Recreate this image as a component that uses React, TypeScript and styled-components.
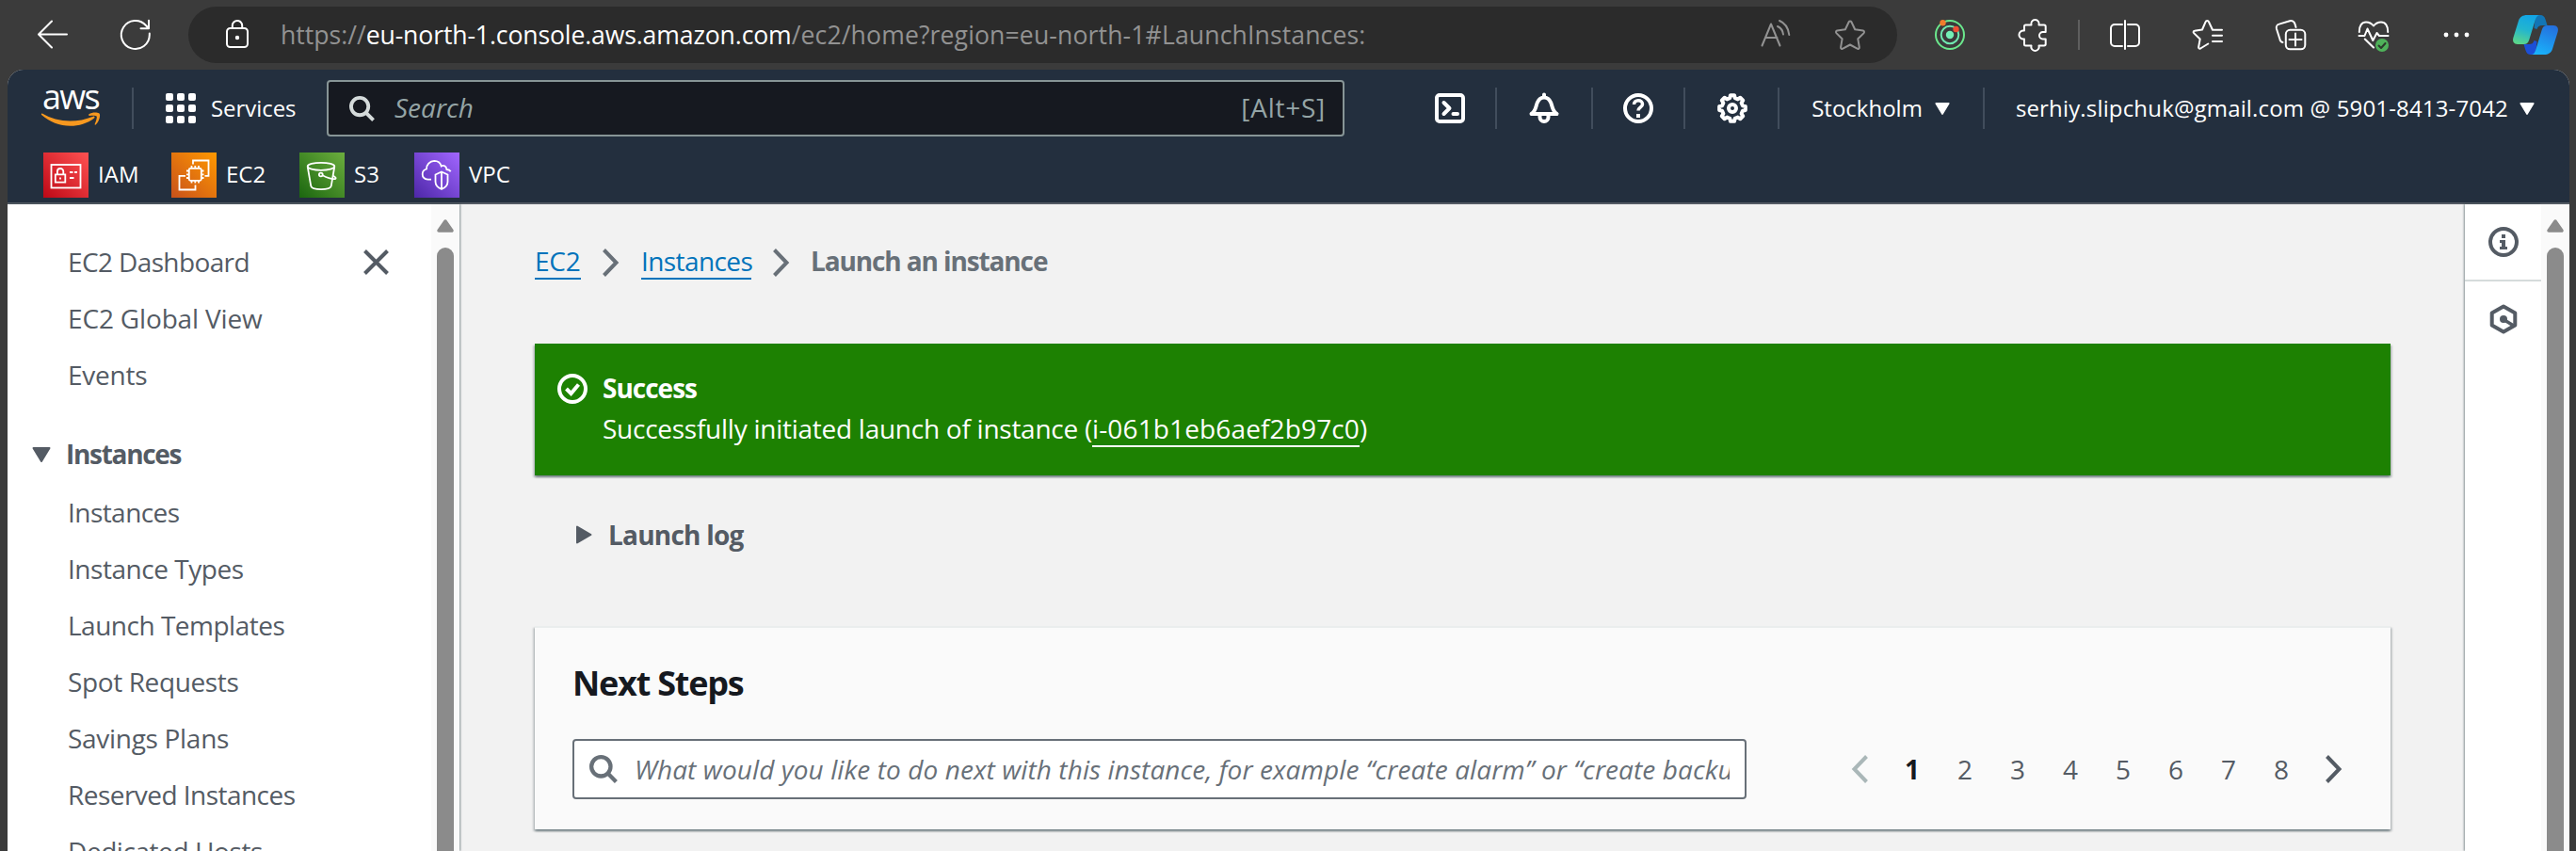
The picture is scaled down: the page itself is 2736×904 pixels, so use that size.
import React from "react";
import styled, { createGlobalStyle } from "styled-components";

const GlobalStyle = createGlobalStyle`
  * { box-sizing: border-box; }
  html, body { margin: 0; background: #3b3b3b; }
  body { font-family: "Open Sans", "Noto Sans", sans-serif; overflow: hidden; }
  svg { display: block; flex: none; overflow: visible; }
`;

const Window = styled.div`
  width: 2736px;
  height: 904px;
  display: flex;
  flex-direction: column;
  overflow: hidden;
  background: #3b3b3b;
`;

/* ---------- Browser toolbar ---------- */

const BrowserBar = styled.div`
  height: 74px;
  flex: none;
  display: flex;
  align-items: center;
  padding: 0 19px 0 40px;
  color: #fff;
`;

const NavButtons = styled.div`
  width: 160px;
  display: flex;
  gap: 56px;
`;

const AddressBar = styled.div`
  width: 1815px;
  height: 60px;
  border-radius: 30px;
  background: #2b2b2b;
  display: flex;
  align-items: center;
  padding: 0 34px 0 40px;
`;

const Url = styled.div`
  flex: 1;
  display: flex;
  margin-left: 34px;
  padding-bottom: 1px;
  font-size: 26.6px;
  line-height: 58px;
  white-space: pre;
  color: #929292;
`;

const UrlHost = styled.span`
  color: #fff;
  letter-spacing: -0.13px;
`;

const UrlPath = styled.span`
  letter-spacing: 0.12px;
`;

const AddressActions = styled.div`
  display: flex;
  gap: 47px;
  color: #929292;
`;

const Extensions = styled.div`
  flex: 1;
  display: flex;
  align-items: center;
  justify-content: space-between;
  margin-left: 40px;
`;

const ExtensionGroup = styled.div<{ $gap: number }>`
  display: flex;
  align-items: center;
  gap: ${(p) => p.$gap}px;
`;

const BarDivider = styled.span`
  width: 2px;
  height: 32px;
  background: #5e5e5e;
`;

/* ---------- Console header ---------- */

const Console = styled.div`
  flex: 1;
  min-height: 0;
  margin: 0 7px 0 8px;
  display: flex;
  flex-direction: column;
  border-radius: 17px 17px 0 0;
  overflow: hidden;
  background: #f2f2f2;
`;

const Header = styled.header`
  flex: none;
  height: 143px;
  background: #232f3e;
  border-bottom: 2px solid #545b64;
  color: #fff;
  font-weight: 500;
  font-size: 24px;
`;

const HeaderRow = styled.div`
  height: 82px;
  display: flex;
  align-items: center;
  padding: 0 37px 0 36px;
`;

const Divider = styled.span<{ $left: number; $right: number }>`
  width: 2px;
  height: 44px;
  flex: none;
  margin: 0 ${(p) => p.$right}px 0 ${(p) => p.$left}px;
  background: #414d5c;
`;

const Label = styled.span`
  padding-bottom: 2px;
`;

const Services = styled.div`
  width: 171px;
  display: flex;
  align-items: center;
  gap: 16px;
  letter-spacing: -0.05px;
`;

const ServiceGrid = styled.span`
  display: grid;
  grid-template-columns: repeat(3, 8px);
  gap: 4px;
`;

const GridDot = styled.i`
  height: 8px;
  border-radius: 2px;
  background: #fff;
`;

const GlobalSearch = styled.div`
  width: 1081px;
  height: 60px;
  display: flex;
  align-items: center;
  padding: 0 18px 0 22px;
  border: 2px solid #879596;
  border-radius: 4px;
  background: #161920;
  font-size: 28px;
  font-weight: 400;
  line-height: 54px;
  color: #95a5a6;
`;

const SearchHint = styled.span`
  flex: 1;
  margin-left: 21px;
  padding-bottom: 2px;
  font-style: italic;
`;

const Shortcut = styled.span`
  padding-bottom: 2px;
  letter-spacing: 0.75px;
`;

const HeaderTools = styled.div`
  display: flex;
  align-items: center;
  margin-left: auto;
`;

const MenuLabel = styled.span<{ $spacing: number; $gap: number }>`
  display: flex;
  align-items: center;
  gap: ${(p) => p.$gap}px;
  letter-spacing: ${(p) => p.$spacing}px;
  white-space: nowrap;
`;

const Favorites = styled.nav`
  display: flex;
  padding: 5px 0 0 38px;
`;

const Favorite = styled.span<{ $width: number }>`
  width: ${(p) => p.$width}px;
  display: flex;
  align-items: center;
  gap: 10px;
  line-height: 48px;
`;

/* ---------- Body ---------- */

const Body = styled.div`
  flex: 1;
  min-height: 0;
  display: flex;
`;

const Sidebar = styled.aside`
  width: 480px;
  flex: none;
  display: flex;
  background: #fff;
  box-shadow: 1px 0 2px rgba(0, 28, 36, 0.45);
  z-index: 1;
`;

const SideNav = styled.nav`
  flex: 1;
  padding: 31px 45px 0 64px;
  overflow: hidden;
  font-size: 28px;
  line-height: 60px;
  color: #545b64;
`;

const NavLine = styled.div<{ $spacing: number }>`
  height: 60px;
  display: flex;
  align-items: center;
  justify-content: space-between;
  letter-spacing: ${(p) => p.$spacing}px;
  white-space: nowrap;
`;

const NavSection = styled.div`
  height: 62px;
  display: flex;
  gap: 16px;
  margin: 24px 0 0 -38px;
  font-weight: 700;
  letter-spacing: -1.3px;

  svg { margin-top: 23px; }
`;

const ScrollTrack = styled.div`
  width: 30px;
  flex: none;
  display: flex;
  flex-direction: column;
  align-items: center;
  gap: 16px;
  padding-top: 16px;
  background: #fafafa;
`;

const ScrollThumb = styled.div`
  flex: 1;
  width: 18px;
  border-radius: 9px 9px 0 0;
  background: #8b8b8b;
`;

const Main = styled.main`
  flex: 1;
  display: flex;
  flex-direction: column;
  padding: 42px 79px 0 80px;
  font-size: 28px;
`;

const Breadcrumbs = styled.div`
  height: 38px;
  display: flex;
  align-items: flex-start;
  line-height: 37px;
  margin-bottom: 68px;

  svg { margin-top: 5px; }
`;

const CrumbLink = styled.a<{ $width: number; $spacing: number }>`
  width: ${(p) => p.$width}px;
  height: 38px;
  letter-spacing: ${(p) => p.$spacing}px;
  white-space: nowrap;
  color: #0073bb;
  border-bottom: 2px solid #0073bb;
`;

const CrumbChevron = styled.span`
  margin: 0 23px;
`;

const CurrentCrumb = styled.span`
  margin-left: -1px;
  font-weight: 700;
  letter-spacing: -1.12px;
  color: #687078;
`;

const raised = `
  box-shadow: 0 2px 2px rgba(0, 28, 36, 0.35), 2px 2px 2px rgba(0, 28, 36, 0.15),
    -2px 2px 2px rgba(0, 28, 36, 0.15);
`;

const SuccessBar = styled.section`
  height: 140px;
  flex: none;
  display: flex;
  gap: 16px;
  padding: 24px;
  background: #1d8102;
  color: #fff;
  line-height: 44px;
  ${raised}

  svg { margin-top: 8px; }
`;

const FlashTitle = styled.div`
  height: 44px;
  line-height: 46px;
  font-weight: 700;
  letter-spacing: -1px;
`;

const FlashText = styled.div`
  display: flex;
  letter-spacing: -0.26px;
  white-space: pre;
`;

const InstanceLink = styled.a`
  height: 38px;
  margin-top: 4px;
  line-height: 36px;
  letter-spacing: 0.14px;
  border-bottom: 2px solid #fff;
`;

const LaunchLog = styled.div`
  height: 44px;
  display: flex;
  align-items: center;
  gap: 17px;
  margin: 41px 0 75px;
  padding-left: 44px;
  font-weight: 700;
  line-height: 44px;
  letter-spacing: -0.78px;
  color: #545b64;
`;

const Panel = styled.section`
  height: 216px;
  padding: 35px 51px 32px 40px;
  border-top: 2px solid #eaeded;
  background: #fafafa;
  ${raised}
`;

const PanelTitle = styled.h2`
  margin: 0 0 35px;
  font-size: 36px;
  line-height: 48px;
  letter-spacing: -1.22px;
  color: #16191f;
`;

const FilterRow = styled.div`
  display: flex;
  align-items: center;
  justify-content: space-between;
`;

const FilterInput = styled.div`
  width: 1247px;
  height: 64px;
  display: flex;
  align-items: center;
  gap: 18px;
  padding: 0 16px;
  border: 2px solid #687078;
  border-radius: 4px;
  background: #fff;
  color: #687078;
`;

const Placeholder = styled.span`
  flex: 1;
  overflow: hidden;
  font-style: italic;
  line-height: 60px;
  letter-spacing: 0.09px;
  white-space: nowrap;
`;

const Pagination = styled.div`
  display: flex;
  align-items: center;
  gap: 19px;
`;

const Pages = styled.div`
  display: flex;
`;

const Page = styled.span<{ $current?: boolean }>`
  width: 56px;
  text-align: center;
  line-height: 60px;
  font-weight: ${(p) => (p.$current ? 700 : 400)};
  color: ${(p) => (p.$current ? "#16191f" : "#545b64")};
`;

const ToolRail = styled.aside`
  width: 81px;
  flex: none;
  display: flex;
  flex-direction: column;
  align-items: center;
  background: #fff;
  box-shadow: -1px 0 2px rgba(0, 28, 36, 0.45);
`;

const RailButton = styled.div<{ $line?: boolean }>`
  width: 100%;
  height: 82px;
  display: flex;
  justify-content: center;
  padding-top: 24px;
  border-bottom: ${(p) => (p.$line ? "2px solid #d5dbdb" : "none")};
`;

/* ---------- Icons ---------- */

type StrokeProps = {
  w?: number;
  h?: number;
  stroke?: number;
  color?: string;
  children: React.ReactNode;
};

const Icon = ({ w = 32, h = 32, stroke = 2, color = "currentColor", children }: StrokeProps) => (
  <svg
    width={w}
    height={h}
    viewBox={`0 0 ${w} ${h}`}
    fill="none"
    stroke={color}
    strokeWidth={stroke}
    strokeLinecap="round"
    strokeLinejoin="round"
  >
    {children}
  </svg>
);

const Magnifier = ({ w, color }: { w: number; color: string }) => (
  <svg width={w} height={w} viewBox="0 0 28 28" fill="none" stroke={color} strokeWidth="4">
    <circle cx="11.5" cy="11.5" r="9.5" />
    <path d="M18.5 18.5l8 8" />
  </svg>
);

const Chevron = ({ left, color }: { left?: boolean; color: string }) => (
  <svg width="18" height="30" viewBox="0 0 18 30" fill="none" stroke={color} strokeWidth="4">
    <path d={left ? "M16.5 1.5L3.5 15l13 13.5" : "M1.5 1.5L14.5 15l-13 13.5"} />
  </svg>
);

const CaretDown = ({ w, h, color }: { w: number; h: number; color: string }) => (
  <svg width={w} height={h} viewBox="0 0 20 16">
    <path d="M1.5 1h17L10 15z" fill={color} stroke={color} strokeWidth="2" strokeLinejoin="round" />
  </svg>
);

const ScrollArrow = () => (
  <svg width="18" height="14" viewBox="0 0 18 14">
    <path d="M2 12L9 2l7 10z" fill="#8b8b8b" stroke="#8b8b8b" strokeWidth="3.5" strokeLinejoin="round" />
  </svg>
);

const gearPath = (() => {
  const pts: string[] = [];
  for (let i = 0; i < 8; i++) {
    [
      [-14, 11.2],
      [-8.5, 14],
      [8.5, 14],
      [14, 11.2],
    ].forEach(([deg, r]) => {
      const a = ((i * 45 + deg) * Math.PI) / 180;
      pts.push(`${(16 + r * Math.sin(a)).toFixed(2)} ${(16 - r * Math.cos(a)).toFixed(2)}`);
    });
  }
  return `M${pts.join("L")}z`;
})();

const AwsLogo = () => (
  <svg width="63" height="38" viewBox="0 0 63 38">
    <text x="1" y="20" fill="#fff" fontSize="36" fontWeight="500" letterSpacing="-1.7">
      aws
    </text>
    <path d="M.8 24.600C9.500 29.800 20 32.600 30.500 32.600c8 0 16.500-1.700 24.500-4.900 1.200-.5 2.200.8 1.100 1.700C49 35 39.500 37.700 30.800 37.700 19.200 37.700 8.500 33.400.4 26.200c-.9-.8-.4-2 .4-1.600z" fill="#f7981f" />
    <path d="M50.500 25.300c3.300-2.300 8.600-2 10.700-1 2 1 .6 8.200-3.300 12-.8.7-1.500.3-1.200-.5 1-2.400 2.700-7.200 1.900-8.300-.8-1.100-5-.9-7.500-.6-.9.1-1.300-1.100-.6-1.600z" fill="#f7981f" />
  </svg>
);

type TileProps = { id: string; from: string; to: string; children: React.ReactNode };

const ServiceTile = ({ id, from, to, children }: TileProps) => (
  <svg width="48" height="48" viewBox="0 0 48 48">
    <linearGradient id={id} x1="0" y1="1" x2="1" y2="0">
      <stop offset="0" stopColor={from} />
      <stop offset="1" stopColor={to} />
    </linearGradient>
    <rect width="48" height="48" fill={`url(#${id})`} />
    <g fill="none" stroke="#fff" strokeWidth="1.8">
      {children}
    </g>
  </svg>
);

const Copilot = () => (
  <svg width="48" height="42" viewBox="0 0 48 42">
    <defs>
      <linearGradient id="cpA" x1="0.6" y1="0" x2="0.3" y2="1">
        <stop offset="0" stopColor="#12a5e6" />
        <stop offset=".5" stopColor="#22b5cf" />
        <stop offset="1" stopColor="#5bd68b" />
      </linearGradient>
      <linearGradient id="cpB" x1="0.7" y1="0" x2="0.3" y2="1">
        <stop offset="0" stopColor="#2470de" />
        <stop offset="1" stopColor="#19b3fb" />
      </linearGradient>
    </defs>
    <path d="M24 0h5c3 0 4.500 1.500 5.500 4.500l2 6.500H31c-3 0-4.500 1-5.500 4l-3-1z" fill="#1275b5" />
    <path d="M24 42h-5c-3 0-4.500-1.500-5.500-4.500L11.500 31H17c3 0 4.500-1 5.500-4l3 1z" fill="#1c4fd6" />
    <path d="M15 0h14c-3 0-4.300 2-5.200 5l-6.600 21.500C16.200 29.600 14.500 31 11.500 31H5c-4 0-5.800-3-4.600-7L6 6C7.300 2 10.500 0 15 0z" fill="url(#cpA)" />
    <path d="M33 42H19c3 0 4.300-2 5.200-5l6.600-21.500C31.800 12.400 33.500 11 36.500 11H43c4 0 5.800 3 4.600 7L42 36c-1.300 4-4.500 6-9 6z" fill="url(#cpB)" />
  </svg>
);

/* ---------- Data ---------- */

const topLinks: [string, number][] = [
  ["EC2 Dashboard", -0.62],
  ["EC2 Global View", -0.16],
  ["Events", -0.25],
];

const instanceLinks: [string, number][] = [
  ["Instances", -0.55],
  ["Instance Types", -0.46],
  ["Launch Templates", -0.5],
  ["Spot Requests", -0.38],
  ["Savings Plans", -0.3],
  ["Reserved Instances", -0.54],
  ["Dedicated Hosts", -0.44],
];

export default function App() {
  return (
    <Window>
      <GlobalStyle />
      <BrowserBar>
        <NavButtons>
          <Icon>
            <path d="M31 15.500H1.500M15 1.500l-14 14 14 14" />
          </Icon>
          <Icon>
            <path d="M30.800 14.500V16A15 15 0 1 1 27 6l3 3.200M30 .800v8.400h-8.500" />
          </Icon>
        </NavButtons>
        <AddressBar>
          <Icon w={24}>
            <rect x="1" y="9" width="22" height="20" rx="3.5" />
            <path d="M6.800 9V6.200a5.200 5.200 0 0 1 10.400 0V9" />
            <circle cx="12" cy="19" r="1.2" fill="#fff" />
          </Icon>
          <Url>
            <span>https://</span>
            <UrlHost>eu-north-1.console.aws.amazon.com</UrlHost>
            <UrlPath>/ec2/home?region=eu-north-1#LaunchInstances:</UrlPath>
          </Url>
          <AddressActions>
            <Icon>
              <path d="M1.500 27.500L11 4.500l9.500 23M5 19h12.500M18 7c3.500 1.500 5.500 4.500 6 8.500M20 1c6 2.500 9.500 8 10.300 15" />
            </Icon>
            <Icon>
              <path d="M14.700 2.300a1.500 1.500 0 0 1 2.700 0l3.800 8 8.600 1.300a1.500 1.500 0 0 1 .8 2.500l-6.300 6.200 1.500 8.800a1.500 1.500 0 0 1-2.200 1.600L16 26.500l-7.700 4.200a1.500 1.500 0 0 1-2.200-1.600l1.500-8.800-6.200-6.200a1.500 1.500 0 0 1 .8-2.500l8.700-1.300z" />
            </Icon>
          </AddressActions>
        </AddressBar>
        <Extensions>
          <ExtensionGroup $gap={32}>
            <ExtensionGroup $gap={56}>
              <Icon color="#6fe89f">
                <circle cx="16" cy="16" r="15" stroke="#6be88d" />
                <circle cx="16" cy="16" r="9.3" stroke="#70e9b0" />
                <circle cx="16" cy="16" r="4.2" fill="#74efb5" stroke="none" />
                <circle cx="8.5" cy="3.2" r="3.2" fill="#f07c2c" stroke="none" />
                <circle cx="22.5" cy="10" r="3.2" fill="#ee4f33" stroke="none" />
              </Icon>
              <Icon>
                <path d="M8.500 5.500h6a4.200 4.200 0 1 1 8 0H28a1.700 1.700 0 0 1 1.700 1.700V13h-3a3.700 3.700 0 0 0 0 7.400h3v5.400a1.700 1.700 0 0 1-1.700 1.700h-5.500a4.200 4.200 0 1 1-8 0h-6A1.500 1.500 0 0 1 7 26v-5.500a4.600 4.600 0 1 1 0-9V7a1.500 1.500 0 0 1 1.500-1.500z" />
              </Icon>
            </ExtensionGroup>
            <BarDivider />
            <ExtensionGroup $gap={56}>
              <Icon>
                <path d="M13 5H5a4 4 0 0 0-4 4v15a4 4 0 0 0 4 4h8M16 1v30M19 5h8a4 4 0 0 1 4 4v15a4 4 0 0 1-4 4h-8" />
              </Icon>
              <Icon>
                <path d="M31 10.700H21l-4-8.500a1.800 1.800 0 0 0-3.400 0L10 10.500l-8.200 1.300a1.300 1.300 0 0 0-.7 2.300l6.600 6.400-1.600 8.600a1.400 1.400 0 0 0 2 1.400l8.200-5M21 16.800h10M21 23h10" />
              </Icon>
              <Icon>
                <path d="M7.500 24a4 4 0 0 1-3-3.200L.9 9.500A4 4 0 0 1 3.700 4.600L15 1.200a4.500 4.500 0 0 1 5.500 3.200L21.500 8" />
                <rect x="10.8" y="10.8" width="20.5" height="20.5" rx="4.5" />
                <path d="M21 14.500v13M14.500 21h13" />
              </Icon>
              <Icon>
                <path d="M.8 13C.5 6.500 3.500 2.500 8 2.500c3.500 0 6 1.500 8 4 2-2.500 4.500-4 8-4 4.500 0 7.500 4 7.200 10.500M.5 17h6l3-7.500L15.300 22l4.200-8 2.500 3h9.500M6.800 20.500L16 29.500" />
                <circle cx="25" cy="27" r="7" fill="#4fb25a" stroke="none" />
                <path d="M21.500 27.500l2.500 2.500 4.500-5" stroke="#2c3a2c" />
              </Icon>
              <Icon>
                <g fill="#fff" stroke="none">
                  <circle cx="5" cy="16" r="2.4" />
                  <circle cx="16" cy="16" r="2.4" />
                  <circle cx="27" cy="16" r="2.4" />
                </g>
              </Icon>
            </ExtensionGroup>
          </ExtensionGroup>
          <Copilot />
        </Extensions>
      </BrowserBar>

      <Console>
        <Header>
          <HeaderRow>
            <AwsLogo />
            <Divider $left={33} $right={34} />
            <Services>
              <ServiceGrid>
                {Array.from({ length: 9 }, (_, i) => (
                  <GridDot key={i} />
                ))}
              </ServiceGrid>
              <Label>Services</Label>
            </Services>
            <GlobalSearch>
              <Magnifier w={27} color="#d5dbdb" />
              <SearchHint>Search</SearchHint>
              <Shortcut>[Alt+S]</Shortcut>
            </GlobalSearch>
            <HeaderTools>
              <Icon stroke={4}>
                <rect x="2" y="2" width="28" height="28" rx="3" />
                <path d="M9.500 10l6 6-6 6M19.500 22H24" />
              </Icon>
              <Divider $left={32} $right={34} />
              <Icon stroke={4}>
                <path d="M16 1.500V4M2.500 22c5-3.500 4.500-8 6.300-12C10.300 6.500 12.800 4.500 16 4.500s5.700 2 7.200 5.500c1.800 4 1.300 8.500 6.300 12z" />
                <path d="M11.500 23v2.500a4.500 4.500 0 0 0 9 0V23" />
              </Icon>
              <Divider $left={34} $right={32} />
              <Icon stroke={4}>
                <circle cx="16" cy="16" r="14" />
                <path d="M11.500 12c0-2.600 2-4.300 4.500-4.300s4.500 1.500 4.500 4.100c0 3-4.500 3.200-4.500 6.700" strokeWidth="3.5" strokeLinecap="butt" />
                <path d="M14 22h4v4h-4z" fill="#fff" stroke="none" />
              </Icon>
              <Divider $left={32} $right={34} />
              <Icon stroke={4}>
                <path d={gearPath} />
                <circle cx="16" cy="16" r="4" />
              </Icon>
              <Divider $left={32} $right={34} />
              <MenuLabel $spacing={0} $gap={13}>
                <Label>Stockholm</Label>
                <CaretDown w={16} h={13} color="#fff" />
              </MenuLabel>
              <Divider $left={35} $right={33} />
              <MenuLabel $spacing={0.16} $gap={12}>
                <Label>serhiy.slipchuk@gmail.com @ 5901-8413-7042</Label>
                <CaretDown w={16} h={13} color="#fff" />
              </MenuLabel>
            </HeaderTools>
          </HeaderRow>
          <Favorites>
            <Favorite $width={136}>
              <ServiceTile id="iam" from="#bd0816" to="#ff5252">
                <rect x="8.5" y="13" width="31" height="24.5" />
                <path d="M12.800 23.300h10.500v8.400H12.800zM14.900 23v-2.800a3.200 3.200 0 0 1 6.400 0V23M18 26.500v2M28 21h3.500M33 21h3M28 27h4.500" />
              </ServiceTile>
              <Label>IAM</Label>
            </Favorite>
            <Favorite $width={136}>
              <ServiceTile id="ec2" from="#c8511b" to="#ff9900">
                <rect x="18.8" y="16.8" width="13" height="13" rx="1.5" />
                <path d="M21.500 16.500V14M25.300 16.500V14M29 16.500V14M21.500 32.500V30M25.300 32.500V30M29 32.500V30M18.500 19.500H16M18.500 23.300H16M18.500 27H16M34.500 19.500H32M34.500 23.300H32M34.500 27H32" />
                <path d="M23 12.500v-4h16.500v16.300h-4M15 24.800H8.500v14.700h17V34.500" />
              </ServiceTile>
              <Label>EC2</Label>
            </Favorite>
            <Favorite $width={122}>
              <ServiceTile id="s3" from="#1b660f" to="#6cae3e">
                <ellipse cx="23" cy="14.8" rx="14.3" ry="4" />
                <path d="M8.700 15l3.600 20.800c.6 2 5 3.300 10.700 3.300s10.100-1.300 10.700-3.300L37.300 15" />
                <circle cx="22.8" cy="23.5" r="1.9" />
                <path d="M24.500 24.300c5 2.500 10.500 4.200 13.500 3.700 1.300-.3.500-2-2-3.300" />
              </ServiceTile>
              <Label>S3</Label>
            </Favorite>
            <Favorite $width={110}>
              <ServiceTile id="vpc" from="#4d27a8" to="#a166ff">
                <path d="M18 28.600h-3.500c-3.500-.3-5.800-2.600-5.800-5.600 0-2.800 1.600-4.800 4.300-5.500-.3-4.500 3.500-8.500 8.300-8.700 3.700 0 6.400 2.200 7.400 5.700 2.300-1.700 5.500 0 5.700 3.500 2 .2 3.500 1 4.300 2.300" />
                <path d="M29 20.500l6.500 3v7.500c0 4-2.700 6.500-6.500 8-3.800-1.500-6.500-4-6.500-8v-7.500zM29 21v17.500" />
              </ServiceTile>
              <Label>VPC</Label>
            </Favorite>
          </Favorites>
        </Header>

        <Body>
          <Sidebar>
            <SideNav>
              {topLinks.map(([label, spacing], i) => (
                <NavLine key={label} $spacing={spacing}>
                  {label}
                  {i === 0 && (
                    <svg width="27" height="27" viewBox="0 0 27 27" fill="none" stroke="#545b64" strokeWidth="4">
                      <path d="M1.500 1.500l24 24M25.500 1.500l-24 24" />
                    </svg>
                  )}
                </NavLine>
              ))}
              <NavSection>
                <CaretDown w={20} h={16} color="#545b64" />
                Instances
              </NavSection>
              {instanceLinks.map(([label, spacing]) => (
                <NavLine key={label} $spacing={spacing}>
                  {label}
                </NavLine>
              ))}
            </SideNav>
            <ScrollTrack>
              <ScrollArrow />
              <ScrollThumb />
            </ScrollTrack>
          </Sidebar>

          <Main>
            <Breadcrumbs>
              <CrumbLink $width={49} $spacing={-0.2}>EC2</CrumbLink>
              <CrumbChevron>
                <Chevron color="#687078" />
              </CrumbChevron>
              <CrumbLink $width={117} $spacing={-0.6}>Instances</CrumbLink>
              <CrumbChevron>
                <Chevron color="#687078" />
              </CrumbChevron>
              <CurrentCrumb>Launch an instance</CurrentCrumb>
            </Breadcrumbs>

            <SuccessBar>
              <Icon stroke={4}>
                <circle cx="16" cy="16" r="14" />
                <path d="M9.500 16l5 5 8-9.500" strokeLinecap="butt" strokeLinejoin="miter" />
              </Icon>
              <div>
                <FlashTitle>Success</FlashTitle>
                <FlashText>
                  Successfully initiated launch of instance (<InstanceLink>i-061b1eb6aef2b97c0</InstanceLink>)
                </FlashText>
              </div>
            </SuccessBar>

            <LaunchLog>
              <svg width="17" height="20" viewBox="0 0 17 20">
                <path d="M1 1.500v17L15.500 10z" fill="#545b64" stroke="#545b64" strokeWidth="2" strokeLinejoin="round" />
              </svg>
              Launch log
            </LaunchLog>

            <Panel>
              <PanelTitle>Next Steps</PanelTitle>
              <FilterRow>
                <FilterInput>
                  <Magnifier w={30} color="#687078" />
                  <Placeholder>
                    What would you like to do next with this instance, for example “create alarm” or “create backup”
                  </Placeholder>
                </FilterInput>
                <Pagination>
                  <Chevron left color="#aab7b8" />
                  <Pages>
                    {[1, 2, 3, 4, 5, 6, 7, 8].map((n) => (
                      <Page key={n} $current={n === 1}>
                        {n}
                      </Page>
                    ))}
                  </Pages>
                  <Chevron color="#545b64" />
                </Pagination>
              </FilterRow>
            </Panel>
          </Main>

          <ToolRail>
            <RailButton $line>
              <Icon color="#545b64" stroke={4}>
                <circle cx="16" cy="16" r="14" />
                <path d="M14 8h4v4h-4zM12 14h6v7h2v3h-8v-3h2v-4h-2z" fill="#545b64" stroke="none" />
              </Icon>
            </RailButton>
            <RailButton>
              <Icon color="#545b64" stroke={4}>
                <path d="M16 2.500l12.300 7v13L16 29.500l-12.300-7v-13z" />
                <circle cx="16" cy="16" r="4" fill="#545b64" stroke="none" />
                <path d="M17 17l9 5.500" strokeWidth="3.5" />
              </Icon>
            </RailButton>
          </ToolRail>
          <ScrollTrack>
            <ScrollArrow />
            <ScrollThumb />
          </ScrollTrack>
        </Body>
      </Console>
    </Window>
  );
}
